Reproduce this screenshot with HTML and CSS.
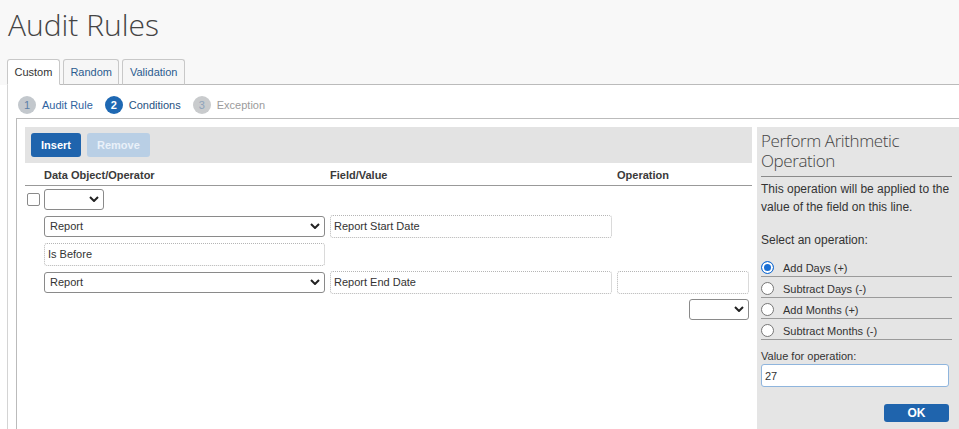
FILE: index.html
```html
<!DOCTYPE html>
<html lang="en">
<head>
<meta charset="utf-8">
<title>Audit Rules</title>
<link rel="stylesheet" href="styles.css">
</head>
<body>
<header class="page-head">
  <h1 class="page-title">Audit Rules</h1>
  <nav class="tabs">
    <a class="tab tab-active">Custom</a>
    <a class="tab">Random</a>
    <a class="tab">Validation</a>
  </nav>
</header>
<section class="tab-panel">
  <ol class="steps">
    <li class="step step-done"><span class="step-num">1</span><span class="step-label">Audit Rule</span></li>
    <li class="step step-current"><span class="step-num">2</span><span class="step-label">Conditions</span></li>
    <li class="step step-todo"><span class="step-num">3</span><span class="step-label">Exception</span></li>
  </ol>
  <div class="rule-box">
    <div class="editor">
      <div class="toolbar">
        <button class="btn btn-primary">Insert</button>
        <button class="btn btn-disabled">Remove</button>
      </div>
      <div class="cond-head">
        <span></span>
        <span>Data Object/Operator</span>
        <span>Field/Value</span>
        <span>Operation</span>
      </div>
      <div class="cond-body">
        <span class="check c1 r1"></span>
        <div class="select select-sm c2 r1"><span></span><svg class="chev" viewBox="0 0 10 6"><path d="M1 1l4 4 4-4"/></svg></div>

        <div class="select c2 r2"><span>Report</span><svg class="chev" viewBox="0 0 10 6"><path d="M1 1l4 4 4-4"/></svg></div>
        <input class="field c3 r2" value="Report Start Date" readonly>

        <input class="field c2 r3" value="Is Before" readonly>

        <div class="select c2 r4"><span>Report</span><svg class="chev" viewBox="0 0 10 6"><path d="M1 1l4 4 4-4"/></svg></div>
        <input class="field c3 r4" value="Report End Date" readonly>
        <input class="field c4 r4" value="" readonly>

        <div class="select select-sm c4 r5 end"><span></span><svg class="chev" viewBox="0 0 10 6"><path d="M1 1l4 4 4-4"/></svg></div>
      </div>
    </div>
    <aside class="op-panel">
      <h2 class="op-title">Perform Arithmetic Operation</h2>
      <p class="op-desc">This operation will be applied to the value of the field on this line.</p>
      <p class="op-label">Select an operation:</p>
      <ul class="op-list">
        <li class="op-item"><span class="radio radio-on"></span>Add Days (+)</li>
        <li class="op-item"><span class="radio"></span>Subtract Days (-)</li>
        <li class="op-item"><span class="radio"></span>Add Months (+)</li>
        <li class="op-item"><span class="radio"></span>Subtract Months (-)</li>
      </ul>
      <label class="op-value-label">Value for operation:</label>
      <input class="op-input" value="27">
      <div class="op-actions"><button class="btn btn-primary btn-ok">OK</button></div>
    </aside>
  </div>
</section>
</body>
</html>
```

FILE: styles.css
```css
html, body {
  overflow: hidden;
}
body {
  margin: 0;
  font-family: "Liberation Sans", Arial, sans-serif;
  color: #333;
  background: #fff;
}

.page-head {
  background: #f8f8f8;
}
.page-title {
  margin: 0;
  height: 45px;
  box-sizing: border-box;
  padding: 4px 0 0 8px;
  font: 300 30px/41px "Open Sans", sans-serif;
  color: #444;
}
.tabs {
  display: flex;
  align-items: flex-end;
  gap: 3px;
  margin: 14px 0 0 7px;
  border-bottom: 1px solid #bbb;
}
.tab {
  display: flex;
  align-items: center;
  height: 24px;
  padding: 0 6.5px;
  margin-bottom: -1px;
  border: 1px solid #c8c8c8;
  border-bottom-color: #bbb;
  border-radius: 3px 3px 0 0;
  background: #f6f6f6;
  font-size: 11px;
  color: #2b5c8f;
}
.tab-active {
  background: #fff;
  border-bottom-color: #fff;
  color: #333;
}

.tab-panel {
  margin-left: 7px;
  border-left: 1px solid #d4d4d4;
  padding: 11px 0 0 8px;
}
.steps {
  display: flex;
  align-items: center;
  height: 18px;
  margin: 0 0 4px 2px;
  padding: 0;
  list-style: none;
}
.step {
  display: flex;
  align-items: center;
  gap: 6px;
  margin-right: 12px;
  font-size: 11px;
}
.step-num {
  display: flex;
  align-items: center;
  justify-content: center;
  width: 18px;
  height: 18px;
  border-radius: 50%;
  font-size: 11px;
}
.step-done .step-num { background: #c3c8cd; color: #5b80a8; }
.step-done .step-label { color: #2f63a0; }
.step-current .step-num { background: #1e68b3; color: #fff; font-weight: bold; }
.step-current .step-label { color: #27527f; }
.step-todo .step-num { background: #c9cbcd; color: #8ea3bb; }
.step-todo .step-label { color: #9b9b9b; }

.rule-box {
  display: flex;
  border-top: 1px solid #bbb;
  border-left: 1px solid #bbb;
  padding: 8px 0 0 8px;
}
.editor {
  width: 727px;
  flex: none;
}
.toolbar {
  display: flex;
  gap: 6px;
  height: 36px;
  box-sizing: border-box;
  padding: 6px;
  background: #e3e3e3;
}
.btn {
  height: 24px;
  padding: 0 10px;
  border: none;
  border-radius: 3px;
  font: bold 11px "Liberation Sans", Arial, sans-serif;
  color: #fff;
}
.btn-primary { background: #1f64ad; }
.btn-disabled { background: #b9cfe5; color: #e9f1f9; }

.cond-head,
.cond-body {
  display: grid;
  grid-template-columns: 14px 281px 282px 132px;
  column-gap: 5px;
}
.cond-head {
  align-items: end;
  height: 23px;
  box-sizing: border-box;
  padding-bottom: 3px;
  border-bottom: 1px solid #999;
  font: bold 11px/13px "Liberation Sans", Arial, sans-serif;
  color: #3a3a3a;
}
.cond-body {
  grid-template-rows: 26px 28px 28px 28px 26px;
  align-items: center;
}
.c1 { grid-column: 1; }
.c2 { grid-column: 2; }
.c3 { grid-column: 3; }
.c4 { grid-column: 4; }
.r1 { grid-row: 1; }
.r2 { grid-row: 2; }
.r3 { grid-row: 3; }
.r4 { grid-row: 4; }
.r5 { grid-row: 5; }
.end { justify-self: end; }

.check {
  width: 13px;
  height: 13px;
  box-sizing: border-box;
  margin-left: 2px;
  border: 1px solid #8a8a8a;
  border-radius: 2px;
  background: #fff;
}
.select {
  display: flex;
  align-items: center;
  justify-content: space-between;
  height: 21px;
  box-sizing: border-box;
  padding: 0 4px 0 5px;
  border: 1px solid #8a8a8a;
  border-radius: 3px;
  background: #fff;
  font-size: 11px;
  color: #333;
}
.select-sm { width: 60px; }
.chev {
  width: 10px;
  height: 6px;
  fill: none;
  stroke: #222;
  stroke-width: 2;
}
.field {
  width: 100%;
  height: 23px;
  box-sizing: border-box;
  padding: 0 3px;
  border: 1px dotted #b5b5b5;
  border-radius: 3px;
  background: #fff;
  font: 11px "Liberation Sans", Arial, sans-serif;
  color: #333;
  outline: none;
}

.op-panel {
  flex: 1;
  margin-left: 5px;
  padding: 0 7px 14px 4px;
  background: #e5e5e5;
}
.op-title {
  margin: 0;
  padding: 4px 0 5px;
  border-bottom: 1px solid #8a8a8a;
  font: 300 17px/20px "Open Sans", sans-serif;
  letter-spacing: -0.4px;
  color: #444;
}
.op-desc {
  margin: 3px 0 0;
  font-size: 12px;
  line-height: 18px;
}
.op-label {
  margin: 15px 0 0;
  font-size: 12px;
  line-height: 18px;
}
.op-list {
  margin: 7px 0 0;
  padding: 0;
  list-style: none;
}
.op-item {
  display: flex;
  align-items: center;
  height: 21px;
  box-sizing: border-box;
  padding-top: 3px;
  border-bottom: 1px solid #9a9a9a;
  font-size: 11px;
  color: #333;
}
.radio {
  width: 13px;
  height: 13px;
  box-sizing: border-box;
  margin-right: 9px;
  border: 1px solid #767676;
  border-radius: 50%;
  background: #fff;
}
.radio-on {
  border-color: #1a6fd4;
  background: #1a6fd4;
  box-shadow: inset 0 0 0 2px #fff;
}
.op-value-label {
  display: block;
  margin-top: 9px;
  font-size: 11px;
  line-height: 14px;
}
.op-input {
  display: block;
  width: 188px;
  height: 23px;
  box-sizing: border-box;
  margin-top: 1px;
  padding: 0 3px;
  border: 1px solid #8fb5dd;
  border-radius: 3px;
  background: #fff;
  font: 11px "Liberation Sans", Arial, sans-serif;
  color: #333;
  outline: none;
}
.op-actions {
  display: flex;
  justify-content: flex-end;
  margin-top: 17px;
  padding-right: 3px;
}
.btn-ok {
  width: 65px;
  height: 18px;
  padding: 0;
  font-size: 12px;
}
```
